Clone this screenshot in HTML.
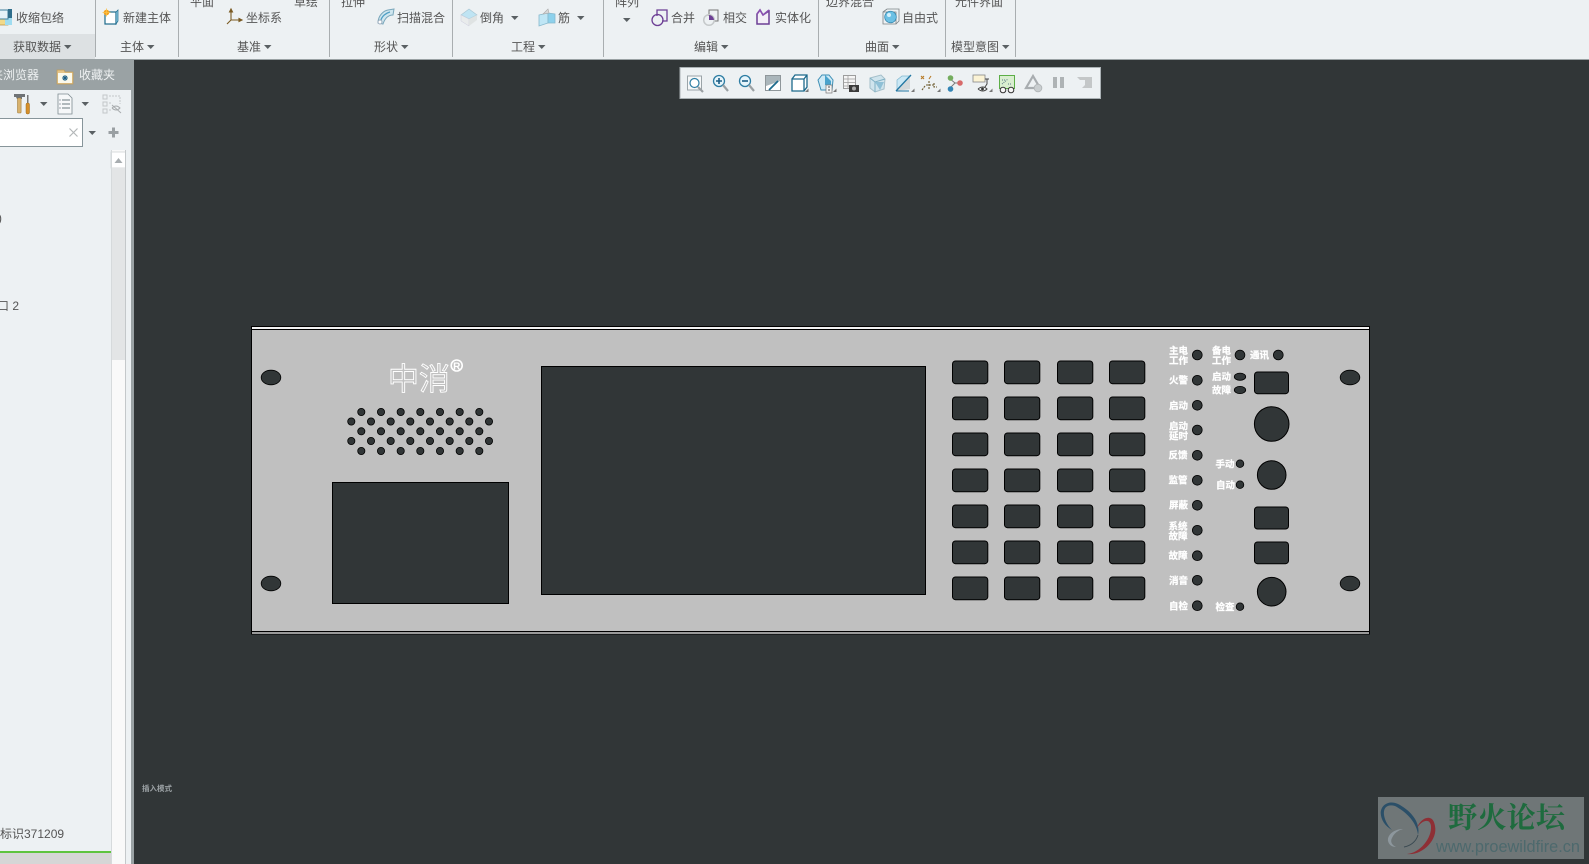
<!DOCTYPE html>
<html><head><meta charset="utf-8"><style>
html,body{margin:0;padding:0;background:#313637;width:1589px;height:864px;overflow:hidden}
body{position:relative;font-family:"Liberation Sans","Noto Sans CJK SC",sans-serif}
svg{position:absolute;left:0;top:0}
.t{font-family:"Liberation Sans","Noto Sans CJK SC",sans-serif;font-size:12px;fill:#555}
.l{font-family:"Noto Sans CJK SC",sans-serif;font-size:9.5px;font-weight:700;fill:#fff;stroke:#fff;stroke-width:.25}
</style></head><body>
<svg width="1589" height="864" viewBox="0 0 1589 864" xmlns="http://www.w3.org/2000/svg">
<defs>
<path id="c" d="M0 0h7.5l-3.75 4z" fill="#5a6063"/>
<path id="m" d="M0 3h3.500v-3.500z" fill="#777"/>
<rect id="b" width="35.300" height="22.700" rx="3" fill="#313637" stroke="#000" stroke-width="1"/>
<circle id="d" r="3.600" fill="#313637" stroke="#000" stroke-width=".8"/>
<circle id="e" r="4.900" fill="#313637" stroke="#000" stroke-width=".8"/>
<ellipse id="h" rx="9.800" ry="7.300" fill="#313637" stroke="#000" stroke-width=".8"/>
</defs>

<rect width="1589" height="864" fill="#313637"/>
<!-- ribbon -->
<rect width="1589" height="59" fill="#edf1f3"/>
<rect y="59" width="1589" height="1" fill="#9aa2a4"/>
<rect y="34" width="95" height="25" fill="#dde1e3"/>
<g fill="#a9aeb0">
<rect x="95" width="1" height="57"/><rect x="178" width="1" height="57"/><rect x="329" width="1" height="57"/><rect x="452" width="1" height="57"/><rect x="603" width="1" height="57"/><rect x="818" width="1" height="57"/><rect x="945" width="1" height="57"/><rect x="1015" width="1" height="57"/>
</g>
<g class="t">
<text class="t" x="16" y="22">收缩包络</text>
<text class="t" x="123" y="22">新建主体</text>
<text class="t" x="246" y="22">坐标系</text>
<text class="t" x="397" y="22">扫描混合</text>
<text class="t" x="480" y="22">倒角</text>
<text class="t" x="558" y="22">筋</text>
<text class="t" x="671" y="22">合并</text>
<text class="t" x="723" y="22">相交</text>
<text class="t" x="775" y="22">实体化</text>
<text class="t" x="902" y="22">自由式</text>
<text class="t" x="190" y="6">平面</text>
<text class="t" x="294" y="6">草绘</text>
<text class="t" x="341" y="6">拉伸</text>
<text class="t" x="615" y="6">阵列</text>
<text class="t" x="826" y="6">边界混合</text>
<text class="t" x="955" y="6">元件界面</text>
<text class="t" x="13" y="51">获取数据</text>
<text class="t" x="120" y="51">主体</text>
<text class="t" x="237" y="51">基准</text>
<text class="t" x="374" y="51">形状</text>
<text class="t" x="511" y="51">工程</text>
<text class="t" x="694" y="51">编辑</text>
<text class="t" x="865" y="51">曲面</text>
<text class="t" x="951" y="51">模型意图</text>
</g>
<use href="#c" x="64" y="45"/><use href="#c" x="147" y="45"/><use href="#c" x="264" y="45"/><use href="#c" x="401" y="45"/><use href="#c" x="538" y="45"/><use href="#c" x="721" y="45"/><use href="#c" x="892" y="45"/><use href="#c" x="1002" y="45"/>
<use href="#c" x="511" y="16"/><use href="#c" x="577" y="16"/><use href="#c" x="623" y="18"/>

<!-- ribbon icons -->
<g>
<rect x="-2" y="19" width="10" height="6" fill="#f1d98a" stroke="#b48a3a" stroke-width=".7"/>
<rect x="5" y="18" width="7" height="7" fill="#9fdcf0"/>
<rect x="-2" y="10" width="10" height="9" fill="#e4f2f8" stroke="#3d7f9c"/>
<rect x="8" y="9" width="4" height="9" fill="#2f6e8c"/>
</g>
<g>
<rect x="105" y="12" width="11" height="12" fill="#fff" stroke="#1d6a8c" stroke-width="1.200"/>
<path d="M116 12l2-2v11l-2 3z" fill="#8ccbe3" stroke="#1d6a8c" stroke-width=".7"/>
<circle cx="106.500" cy="12.500" r="2.800" fill="#f6a21e"/>
<path d="M106.500 8.500v8M102.500 12.500h8" stroke="#f9c24a" stroke-width=".8"/>
</g>
<g fill="none" stroke="#7a5a22" stroke-width="1.100">
<path d="M231 20V11M231 20H241M231 20L227 24"/>
<path d="M229.500 12L231 9l1.500 3z M239 18.500l3 1.500-3 1.500z" fill="#7a5a22"/>
</g>
<g>
<path d="M378 23c0-7 5-12 10-13l6-1-1 6c-5 0-8 3-10 9z" fill="#cfe6ef" stroke="#7aa7bb"/>
<path d="M381 20c1-4 5-7 9-8" stroke="#4e9ec4" stroke-width="1.300" fill="none"/>
<circle cx="380" cy="22" r="2" fill="#fff" stroke="#9ab"/>
</g>
<g>
<path d="M461 15l8-6 8 6-8 4z" fill="#bfe4f3" stroke="#a9c7d4" stroke-width=".7"/>
<path d="M461 15l8 4v7l-8-5z" fill="#e9ecec" stroke="#ccd" stroke-width=".5"/>
<path d="M469 19l8-4v5l-8 6z" fill="#dfe3e3"/>
</g>
<g>
<path d="M539 15l9-2v10l-9 3z" fill="#bfe6f5" stroke="#86b8cc" stroke-width=".8"/>
<path d="M548 13l7 1v9l-7 0z" fill="#8dd1ec" stroke="#86b8cc" stroke-width=".8"/>
<path d="M543 14l5-5 1 4z" fill="#d8d8d8" stroke="#aaa" stroke-width=".6"/>
</g>
<g fill="none" stroke="#6d3f95" stroke-width="1.300">
<path d="M657 16V10h10v11h-5"/><circle cx="657.500" cy="20" r="5.500"/>
</g>
<g fill="none">
<path d="M709 16V10h9v11h-4" stroke="#777" stroke-width="1"/><circle cx="709" cy="20" r="5.300" stroke="#c5c9ca" stroke-width="1.500"/>
<path d="M709 15a5 5 0 0 1 5 5h-5z" fill="#6d3f95"/>
</g>
<g fill="none" stroke="#6d3f95" stroke-width="1.500">
<path d="M757 14v10h12V11l-6 4-3-5z" fill="#f3eef7"/>
<path d="M757 14l3-4 3 5 6-5" stroke="#8a4fb0"/>
</g>
<g>
<path d="M883 12h13v12h-13zM883 12l4-3h12v12l-3 3" fill="none" stroke="#7b8285" stroke-width=".8"/>
<circle cx="890.500" cy="17" r="5.800" fill="#6cc0e4" stroke="#2b7fa8" stroke-width=".7"/>
<circle cx="889" cy="15" r="2" fill="#d4f0fb"/>
</g>

<!-- left column -->
<rect y="60" width="134" height="804" fill="#9aa2a4"/>
<rect y="90" width="131" height="774" fill="#edf1f3"/>
<text x="-9" y="79" font-size="12" fill="#eef1f2" font-family="Noto Sans CJK SC,sans-serif">夹浏览器</text>
<text x="79" y="79" font-size="12" fill="#eef1f2" font-family="Noto Sans CJK SC,sans-serif">收藏夹</text>
<g>
<path d="M57 70h7l1 2h8v12H57z" fill="#e5c488" stroke="#c19c58" stroke-width=".7"/>
<rect x="58" y="73" width="14" height="10" fill="#fbf9ec"/>
<path d="M65 75v6M62 78h6M63 76l4 4M67 76l-4 4" stroke="#1c5e86" stroke-width="1"/>
</g>
<!-- tool row -->
<g>
<path d="M14 94h11v3h-3v2h-5l-1-2h-2z" fill="#6f7376"/>
<rect x="17.500" y="98" width="3.600" height="15" rx="1" fill="#d8b26d" stroke="#a5803f" stroke-width=".6"/>
<rect x="27" y="95" width="1.500" height="8" fill="#777"/>
<rect x="26" y="103" width="3.500" height="11" rx="1.500" fill="#d68f2a" stroke="#9a6a20" stroke-width=".5"/>
</g>
<use href="#c" x="40" y="102"/><use href="#c" x="81.500" y="102"/>
<g>
<path d="M58 94h10l4 4v16H58z" fill="#f6f8f9" stroke="#7e8b90" stroke-width=".8"/>
<path d="M62 100h8M62 104h8M62 108h8" stroke="#6a7a80"/>
<path d="M59.500 100h1M59.500 104h1M59.500 108h1" stroke="#456"/>
</g>
<g fill="none" stroke="#c2c6c8">
<rect x="103" y="95" width="4" height="4"/><rect x="103" y="102" width="4" height="4"/><rect x="103" y="109" width="4" height="4"/>
<path d="M109 96h11v8M109 103h3M109 110h3" stroke-dasharray="2 1"/>
<path d="M112 108q4-4 8 0q-4 4-8 0M112 105l9 8" stroke="#a8acae"/>
</g>
<!-- search -->
<rect x="-2" y="118.500" width="84.500" height="28" fill="#fff" stroke="#87959a"/>
<path d="M69.500 128.500l8 8M77.500 128.500l-8 8" stroke="#b3b7b9" stroke-width="1.200"/>
<use href="#c" x="88.500" y="131"/>
<path d="M113.500 127.500v10M108.500 132.500h10" stroke="#9aa0a3" stroke-width="3"/>
<!-- tree -->
<rect x="111" y="150" width="15" height="714" fill="#f9f9f9"/>
<rect x="111" y="152" width="14.500" height="16" fill="#fff" stroke="#cfd3d5" stroke-width=".8"/>
<path d="M114.500 163l4-5 4 5z" fill="#a8adb0"/>
<rect x="112" y="168" width="13" height="192" fill="#e3e5e6"/>
<rect x="125" y="150" width="1" height="714" fill="#c4c8ca"/>
<rect x="111" y="150" width="1" height="714" fill="#d6dadc"/>
<text x="-2" y="222" font-size="12" fill="#555">)</text>
<text x="-3" y="310" font-size="12" fill="#555" font-family="Liberation Sans,Noto Sans CJK SC,sans-serif">口 2</text>
<text x="0" y="838" font-size="12" fill="#555" font-family="Liberation Sans,Noto Sans CJK SC,sans-serif">标识371209</text>
<rect y="851" width="111" height="2" fill="#5ec43f"/>
<rect y="853" width="111" height="11" fill="#d6d6d6"/>
<text x="142" y="791" font-size="7.500" font-weight="700" fill="#9ba1a4" font-family="Noto Sans CJK SC,sans-serif">插入模式</text>

<!-- floating toolbar -->
<rect x="680" y="67.500" width="420.500" height="31" fill="#edf1f3" stroke="#aab1b4"/>
<g>
<rect x="687.500" y="76" width="14" height="14" fill="#f6f8f9" stroke="#9ba4a8"/>
<circle cx="694.500" cy="83" r="4.500" fill="#fff" stroke="#2d7da3" stroke-width="1.200"/>
<path d="M698 87l5 5" stroke="#9aa0a3" stroke-width="2.200"/>
<circle cx="719" cy="81" r="5.500" fill="#e7f5fb" stroke="#2d7da3" stroke-width="1.300"/>
<path d="M719 78v6M716 81h6" stroke="#1c5e86" stroke-width="1.600"/>
<path d="M723 85l5 6" stroke="#9aa0a3" stroke-width="2.200"/>
<circle cx="745" cy="81" r="5.500" fill="#e7f5fb" stroke="#2d7da3" stroke-width="1.300"/>
<path d="M742 81h6" stroke="#1c5e86" stroke-width="1.600"/>
<path d="M749 85l5 6" stroke="#9aa0a3" stroke-width="2.200"/>
<rect x="765.500" y="75.500" width="15" height="15" fill="#fff" stroke="#8f979b"/>
<path d="M766 76h14v5l-14 5z" fill="#aab6bb"/>
<path d="M769 90l9-9" stroke="#1d6a8c" stroke-width="1.800"/>
<path d="M792 79h12v12h-12zM792 79l3-4h12v12l-3 4M804 79l3-4" fill="#fff" stroke="#1d6a8c" stroke-width="1.300"/>
<use href="#m" x="805" y="89"/>
<path d="M818 80l4-5h7l4 5-1 10h-11z" fill="#cfeaf6" stroke="#3c8eb5" stroke-width="1"/>
<path d="M825 75l6 6v4h-6z" fill="#4aa3cc"/>
<rect x="826" y="85" width="6" height="8" fill="#f4f4f4" stroke="#777" stroke-width=".7"/>
<path d="M828 87h2M828 90h2" stroke="#555"/>
<use href="#m" x="833" y="89"/>
<rect x="843.500" y="75.500" width="12" height="13" fill="#f5f5f5" stroke="#888" stroke-width=".8"/>
<path d="M844 79h11M844 82.500h11M844 86h11M848 76v12" stroke="#9a9a9a" stroke-width=".7"/>
<rect x="849" y="85" width="10" height="7" fill="#3a3a3a"/><circle cx="854" cy="88.500" r="2" fill="#aaa"/>
<path d="M870 78l11-3 4 4-1 10-9 3-5-4z" fill="#cfe4ed" stroke="#a4bfca"/>
<path d="M870 78l5 4 10-3M875 82l0 10" stroke="#7fb0c4" fill="none"/>
<path d="M875 82l9 0-4 8z" fill="#8fc0d6"/>
<path d="M896 91l14-16v14z" fill="#d4d8da"/>
<path d="M897 90V80l5-4h9" fill="#cbe8f5" stroke="#7fb6cf" stroke-width=".7"/>
<path d="M896 91l15-16" stroke="#2277a3" stroke-width="1.300"/>
<path d="M896 91h13" stroke="#2277a3" stroke-width="1"/>
<use href="#m" x="911" y="89"/>
<path d="M921 76l3 3M924 76l-3 3M931 76l-2 3" stroke="#b87a26" stroke-width="1.100"/>
<path d="M929 81v8M926 85h9M922 90l3-4M934 83v4h3" stroke="#6d5a2c" stroke-width="1.100" stroke-dasharray="2 1" fill="none"/>
<use href="#m" x="937" y="89"/>
<path d="M949 78l6 5-6 6M955 83h5" stroke="#7a7a7a" fill="none"/>
<circle cx="950.500" cy="78" r="2.800" fill="#74ad5e"/><circle cx="950.500" cy="89" r="2.800" fill="#3385b5"/><circle cx="960" cy="83" r="2.800" fill="#d76a6a"/>
<rect x="973" y="75" width="12" height="7" fill="#fbf3d5" stroke="#888" stroke-width=".8"/>
<path d="M987 79v5l-2 3M989 79h-4M978 89q5-4 9 0q-4 4-9 0" stroke="#444" fill="none" stroke-width="1"/>
<circle cx="982.500" cy="89" r="1.400" fill="#333"/>
<use href="#m" x="989" y="89"/>
<rect x="999.500" y="75.500" width="15" height="13" fill="#d9eed0" stroke="#5cae47"/>
<path d="M1002 80h4M1002 84l6-5M1008 84h3" stroke="#5a7a8a" stroke-dasharray="1 1"/>
<circle cx="1003" cy="90" r="2.800" fill="#f6f6f6" stroke="#333"/><circle cx="1011" cy="90" r="2.800" fill="#f6f6f6" stroke="#333"/>
<path d="M1033 76l-7 12h14z" fill="none" stroke="#a8adb0" stroke-width="2.200"/>
<circle cx="1038" cy="88" r="3.800" fill="#c9ced0" stroke="#b3b7b9"/>
<rect x="1053" y="77" width="4" height="11" fill="#aeb3b5"/><rect x="1060" y="77" width="4" height="11" fill="#aeb3b5"/>
<path d="M1077 77h15v11h-10l3-3v-5h-5z" fill="#c4c7c8"/>
</g>

<!-- panel -->
<rect x="251.500" y="326.500" width="1118" height="307.500" fill="#c0c0c0" stroke="#000"/>
<rect x="252" y="327" width="1117" height="2" fill="#f2f2f2"/>
<rect x="252" y="329" width="1117" height="1" fill="#000"/>
<rect x="252" y="631" width="1117" height="1" fill="#000"/>
<rect x="252" y="632" width="1117" height="2" fill="#999"/>

<use href="#h" x="271" y="377.500"/><use href="#h" x="271" y="583.500"/><use href="#h" x="1350" y="377.500"/><use href="#h" x="1350" y="583.500"/>

<!-- logo -->
<g font-family="Noto Sans CJK SC,sans-serif" font-size="31" fill="#c0c0c0" stroke="#fff" stroke-width=".9">
<text x="388" y="390">中</text><text x="419" y="390">消</text>
</g>
<circle cx="456.700" cy="365.500" r="5.500" fill="#c0c0c0" stroke="#fff" stroke-width="1.600"/>
<text x="456.700" y="369.500" font-size="10" font-weight="700" fill="#fff" text-anchor="middle" font-family="Liberation Sans">R</text>

<!-- vent -->
<use href="#d" x="361.300" y="412"/><use href="#d" x="381" y="412"/><use href="#d" x="400.700" y="412"/><use href="#d" x="420.300" y="412"/><use href="#d" x="440" y="412"/><use href="#d" x="459.700" y="412"/><use href="#d" x="479.300" y="412"/>
<use href="#d" x="351.300" y="421.500"/><use href="#d" x="371" y="421.500"/><use href="#d" x="390.700" y="421.500"/><use href="#d" x="410.300" y="421.500"/><use href="#d" x="430" y="421.500"/><use href="#d" x="449.700" y="421.500"/><use href="#d" x="469.300" y="421.500"/><use href="#d" x="489" y="421.500"/>
<use href="#d" x="361.300" y="431.300"/><use href="#d" x="381" y="431.300"/><use href="#d" x="400.700" y="431.300"/><use href="#d" x="420.300" y="431.300"/><use href="#d" x="440" y="431.300"/><use href="#d" x="459.700" y="431.300"/><use href="#d" x="479.300" y="431.300"/>
<use href="#d" x="351.300" y="441"/><use href="#d" x="371" y="441"/><use href="#d" x="390.700" y="441"/><use href="#d" x="410.300" y="441"/><use href="#d" x="430" y="441"/><use href="#d" x="449.700" y="441"/><use href="#d" x="469.300" y="441"/><use href="#d" x="489" y="441"/>
<use href="#d" x="361.300" y="451"/><use href="#d" x="381" y="451"/><use href="#d" x="400.700" y="451"/><use href="#d" x="420.300" y="451"/><use href="#d" x="440" y="451"/><use href="#d" x="459.700" y="451"/><use href="#d" x="479.300" y="451"/>

<rect x="332.500" y="482.500" width="176" height="121" fill="#313637" stroke="#000"/>
<rect x="541.500" y="366.500" width="384" height="228" fill="#313637" stroke="#000"/>

<!-- key grid -->
<g>
<use href="#b" x="952.500" y="361"/><use href="#b" x="1004.500" y="361"/><use href="#b" x="1057.500" y="361"/><use href="#b" x="1109.500" y="361"/>
<use href="#b" x="952.500" y="397"/><use href="#b" x="1004.500" y="397"/><use href="#b" x="1057.500" y="397"/><use href="#b" x="1109.500" y="397"/>
<use href="#b" x="952.500" y="433"/><use href="#b" x="1004.500" y="433"/><use href="#b" x="1057.500" y="433"/><use href="#b" x="1109.500" y="433"/>
<use href="#b" x="952.500" y="469"/><use href="#b" x="1004.500" y="469"/><use href="#b" x="1057.500" y="469"/><use href="#b" x="1109.500" y="469"/>
<use href="#b" x="952.500" y="505"/><use href="#b" x="1004.500" y="505"/><use href="#b" x="1057.500" y="505"/><use href="#b" x="1109.500" y="505"/>
<use href="#b" x="952.500" y="541"/><use href="#b" x="1004.500" y="541"/><use href="#b" x="1057.500" y="541"/><use href="#b" x="1109.500" y="541"/>
<use href="#b" x="952.500" y="577"/><use href="#b" x="1004.500" y="577"/><use href="#b" x="1057.500" y="577"/><use href="#b" x="1109.500" y="577"/>
</g>

<!-- leds -->
<use href="#e" x="1197.300" y="355"/><use href="#e" x="1197.300" y="380.300"/><use href="#e" x="1197.300" y="405.300"/><use href="#e" x="1197.300" y="430"/><use href="#e" x="1197.300" y="455.300"/><use href="#e" x="1197.300" y="480.300"/><use href="#e" x="1197.300" y="505.300"/><use href="#e" x="1197.300" y="530.300"/><use href="#e" x="1197.300" y="555.700"/><use href="#e" x="1197.300" y="580.300"/><use href="#e" x="1197.300" y="605.700"/>
<use href="#e" x="1240" y="355"/><use href="#e" x="1278.300" y="355"/>
<ellipse cx="1240" cy="376.700" rx="5.700" ry="3.600" fill="#313637" stroke="#000" stroke-width=".8"/>
<ellipse cx="1240" cy="390" rx="5.700" ry="3.600" fill="#313637" stroke="#000" stroke-width=".8"/>
<circle cx="1240" cy="463.700" r="3.800" fill="#313637" stroke="#000" stroke-width=".8"/>
<circle cx="1240" cy="484.700" r="3.800" fill="#313637" stroke="#000" stroke-width=".8"/>
<circle cx="1240" cy="606.700" r="3.800" fill="#313637" stroke="#000" stroke-width=".8"/>
<rect x="1254.500" y="372" width="34" height="21.700" rx="3" fill="#313637" stroke="#000"/>
<rect x="1254.500" y="507" width="34" height="22" rx="3" fill="#313637" stroke="#000"/>
<rect x="1254.500" y="542" width="34" height="21.700" rx="3" fill="#313637" stroke="#000"/>
<circle cx="1271.700" cy="424" r="17.300" fill="#313637" stroke="#000"/>
<circle cx="1271.700" cy="475" r="14.300" fill="#313637" stroke="#000"/>
<circle cx="1271.700" cy="591.700" r="14.300" fill="#313637" stroke="#000"/>

<!-- labels -->
<g>
<text class="l" x="1169" y="354">主电</text><text class="l" x="1169" y="364">工作</text>
<text class="l" x="1169" y="383.500">火警</text>
<text class="l" x="1169" y="409">启动</text>
<text class="l" x="1169" y="429.500">启动</text><text class="l" x="1169" y="439.500">延时</text>
<text class="l" x="1168.500" y="458.500">反馈</text>
<text class="l" x="1168.500" y="483.500">监管</text>
<text class="l" x="1169" y="508.500">屏蔽</text>
<text class="l" x="1168.500" y="529.500">系统</text><text class="l" x="1168.500" y="539.500">故障</text>
<text class="l" x="1168.500" y="559">故障</text>
<text class="l" x="1169" y="584">消音</text>
<text class="l" x="1169" y="609.500">自检</text>
<text class="l" x="1212" y="354">备电</text><text class="l" x="1212" y="364">工作</text>
<text class="l" x="1250" y="358.500">通讯</text>
<text class="l" x="1212" y="380">启动</text><text class="l" x="1212" y="393.500">故障</text>
<text class="l" x="1215.500" y="467.500">手动</text>
<text class="l" x="1216" y="488.500">自动</text>
<text class="l" x="1215.500" y="610.500">检查</text>
</g>

<!-- watermark -->
<rect x="1378" y="797" width="206" height="62" fill="#6f7677"/>
<text x="1448" y="827.500" font-size="29" font-weight="700" fill="#1e6b3e" font-family="Noto Serif CJK SC,serif" textLength="117" lengthAdjust="spacingAndGlyphs">野火论坛</text>
<text x="1436" y="852" font-size="17" fill="#4d696d" font-family="Liberation Sans,sans-serif" textLength="144" lengthAdjust="spacingAndGlyphs">www.proewildfire.cn</text>
<path d="M1380.700 813C1381 804 1390 800 1398 804C1410 810 1421 822 1418 835C1417 822 1405 811 1395 806C1388 804 1383 807 1384 815C1385 821 1388 826 1392 830C1385 826 1381 820 1380.700 813z" fill="#2b4f68"/>
<path d="M1417 828C1420 818 1433 812 1435 826C1438 840 1422 856 1407 854C1420 853 1432 838 1431 826C1430 818 1422 820 1417 828z" fill="#8e2f35"/>
<path d="M1403 829C1394 829 1387 835 1388 841C1389 845 1392 847 1396 847C1392 845 1390 842 1392 838C1394 833 1399 830 1403 829z" fill="#8d979d"/>
<path d="M1418 835C1416 842 1410 846 1404 847" fill="none" stroke="#3a4a52" stroke-width=".9"/>
</svg>
</body></html>
